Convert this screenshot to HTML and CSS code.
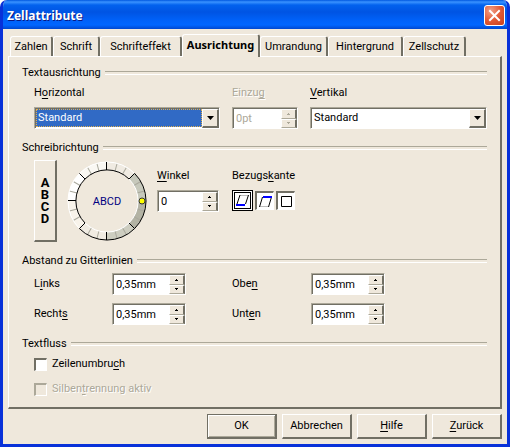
FILE: index.html
```html
<!DOCTYPE html>
<html lang="de">
<head>
<meta charset="utf-8">
<title>Zellattribute</title>
<link rel="stylesheet" href="styles.css">
</head>
<body>
<form class="dialog">
  <header class="titlebar">
    <h1>Zellattribute</h1>
    <button type="button" class="close" aria-label="Schließen">
      <svg width="21" height="21" viewBox="0 0 21 21" aria-hidden="true"><path d="M6 6L15 15M15 6L6 15"/></svg>
    </button>
  </header>

  <nav class="tabs" role="tablist">
    <button type="button" role="tab" class="tab">Zahlen</button>
    <button type="button" role="tab" class="tab">Schrift</button>
    <button type="button" role="tab" class="tab">Schrifteffekt</button>
    <button type="button" role="tab" class="tab active" aria-selected="true">Ausrichtung</button>
    <button type="button" role="tab" class="tab">Umrandung</button>
    <button type="button" role="tab" class="tab">Hintergrund</button>
    <button type="button" role="tab" class="tab">Zellschutz</button>
  </nav>

  <main class="panel">
    <section class="group">
      <h2>Textausrichtung</h2>
      <div class="group-body alignment">
        <div class="field">
          <label for="horizontal">H<u>o</u>rizontal</label>
          <div class="combo focused">
            <select id="horizontal"><option>Standard</option></select>
            <span class="drop"><svg width="7" height="4" viewBox="0 0 7 4" aria-hidden="true"><path d="M0 0H7L3.5 4Z"/></svg></span>
          </div>
        </div>
        <div class="field">
          <label for="indent" class="disabled">Einzu<u>g</u></label>
          <div class="spin disabled">
            <input id="indent" type="text" value="0pt" disabled>
            <div class="arrows">
              <button type="button" aria-label="Mehr" disabled><svg width="3" height="2" viewBox="0 0 3 2"><path d="M1 0h1v1h1v1H0V1h1Z"/></svg></button>
              <button type="button" aria-label="Weniger" disabled><svg width="3" height="2" viewBox="0 0 3 2"><path d="M0 0h3v1H2v1H1V1H0Z"/></svg></button>
            </div>
          </div>
        </div>
        <div class="field">
          <label for="vertical"><u>V</u>ertikal</label>
          <div class="combo">
            <select id="vertical"><option>Standard</option></select>
            <span class="drop"><svg width="7" height="4" viewBox="0 0 7 4" aria-hidden="true"><path d="M0 0H7L3.5 4Z"/></svg></span>
          </div>
        </div>
      </div>
    </section>

    <section class="group">
      <h2>Schreibrichtung</h2>
      <div class="group-body direction">
        <button type="button" class="stacked"><span>A</span><span>B</span><span>C</span><span>D</span></button>
        <svg class="dial" width="80" height="82" viewBox="-40 -41 80 82" role="img" aria-label="Winkel">
          <g class="shade">
            <circle r="35" pathLength="24" stroke="#fff"/>
            <circle r="35" pathLength="24" stroke="#b3b3a4" stroke-dasharray="3 21"/>
            <circle r="35" pathLength="24" stroke="#cdcdc0" stroke-dasharray="3 21" stroke-dashoffset="-3"/>
            <circle r="35" pathLength="24" stroke="#f0ebe2" stroke-dasharray="3 21" stroke-dashoffset="-6"/>
            <circle r="35" pathLength="24" stroke="#f8f3ea" stroke-dasharray="3 21" stroke-dashoffset="-9"/>
            <circle r="35" pathLength="24" stroke="#faf8f3" stroke-dasharray="3 21" stroke-dashoffset="-15"/>
            <circle r="35" pathLength="24" stroke="#f0ebe2" stroke-dasharray="3 21" stroke-dashoffset="-18"/>
            <circle r="35" pathLength="24" stroke="#c6c8bb" stroke-dasharray="3 21" stroke-dashoffset="-21"/>
          </g>
          <g class="minor">
            <g id="pair"><path d="M31 0H39" transform="rotate(15)"/><path d="M31 0H39" transform="rotate(30)"/></g>
            <use href="#pair" transform="rotate(45)"/><use href="#pair" transform="rotate(90)"/>
            <use href="#pair" transform="rotate(135)"/><use href="#pair" transform="rotate(180)"/>
            <use href="#pair" transform="rotate(225)"/><use href="#pair" transform="rotate(270)"/>
            <use href="#pair" transform="rotate(315)"/>
          </g>
          <g class="rim">
            <path class="light" d="M-27.6 27.6A39 39 0 0 1 27.6 -27.6"/>
            <path class="dark" d="M27.6 -27.6A39 39 0 0 1 -27.6 27.6"/>
            <path class="dark" d="M-22 22A31 31 0 0 1 22 -22"/>
            <path class="light" d="M22 -22A31 31 0 0 1 -22 22"/>
          </g>
          <g class="major">
            <path d="M-.5 -39V-31M-.5 31V39M-39 -.5H-31M-27.6 -27.6L-22 -22M27.6 -27.6L22 -22M-27.6 27.6L-22 22M27.6 27.6L22 22"/>
          </g>
          <circle class="knob" cx="35" cy="0" r="3"/>
          <text x="0" y="4">ABCD</text>
        </svg>
        <div class="field angle">
          <label for="angle"><u>W</u>inkel</label>
          <div class="spin">
            <input id="angle" type="text" value="0">
            <div class="arrows">
              <button type="button" aria-label="Mehr"><svg width="3" height="2" viewBox="0 0 3 2"><path d="M1 0h1v1h1v1H0V1h1Z"/></svg></button>
              <button type="button" aria-label="Weniger"><svg width="3" height="2" viewBox="0 0 3 2"><path d="M0 0h3v1H2v1H1V1H0Z"/></svg></button>
            </div>
          </div>
        </div>
        <div class="field angle" role="radiogroup" aria-labelledby="edge-label">
          <span id="edge-label">Bezugs<u>k</u>ante</span>
          <div class="edges">
            <label class="edge">
              <input type="radio" name="edge" aria-label="Untere Zellkante" checked>
              <svg width="13" height="13" viewBox="0 0 13 13"><path class="faint" d="M4 1.5H12"/><path class="ink" d="M4 1L1 10M12.5 1L9.5 10"/><path class="blue" d="M0 11H9"/></svg>
            </label>
            <label class="edge">
              <input type="radio" name="edge" aria-label="Obere Zellkante">
              <svg width="13" height="13" viewBox="0 0 13 13"><path class="faint" d="M1 11.5H9"/><path class="ink" d="M3.5 2L.5 12M12.5 2L9.5 12"/><path class="blue" d="M4 2H13"/></svg>
            </label>
            <label class="edge">
              <input type="radio" name="edge" aria-label="Innerhalb der Zelle">
              <svg width="13" height="13" viewBox="0 0 13 13"><path class="ink" d="M1.5 1.5H11.5V11.5H1.5Z"/></svg>
            </label>
          </div>
        </div>
      </div>
    </section>

    <section class="group">
      <h2>Abstand zu Gitterlinien</h2>
      <div class="group-body spacing">
        <label for="left">L<u>i</u>nks</label>
        <div class="spin">
          <input id="left" type="text" value="0,35mm">
          <div class="arrows">
            <button type="button" aria-label="Mehr"><svg width="3" height="2" viewBox="0 0 3 2"><path d="M1 0h1v1h1v1H0V1h1Z"/></svg></button>
            <button type="button" aria-label="Weniger"><svg width="3" height="2" viewBox="0 0 3 2"><path d="M0 0h3v1H2v1H1V1H0Z"/></svg></button>
          </div>
        </div>
        <label for="top">Obe<u>n</u></label>
        <div class="spin">
          <input id="top" type="text" value="0,35mm">
          <div class="arrows">
            <button type="button" aria-label="Mehr"><svg width="3" height="2" viewBox="0 0 3 2"><path d="M1 0h1v1h1v1H0V1h1Z"/></svg></button>
            <button type="button" aria-label="Weniger"><svg width="3" height="2" viewBox="0 0 3 2"><path d="M0 0h3v1H2v1H1V1H0Z"/></svg></button>
          </div>
        </div>
        <label for="right">Recht<u>s</u></label>
        <div class="spin">
          <input id="right" type="text" value="0,35mm">
          <div class="arrows">
            <button type="button" aria-label="Mehr"><svg width="3" height="2" viewBox="0 0 3 2"><path d="M1 0h1v1h1v1H0V1h1Z"/></svg></button>
            <button type="button" aria-label="Weniger"><svg width="3" height="2" viewBox="0 0 3 2"><path d="M0 0h3v1H2v1H1V1H0Z"/></svg></button>
          </div>
        </div>
        <label for="bottom">Unt<u>e</u>n</label>
        <div class="spin">
          <input id="bottom" type="text" value="0,35mm">
          <div class="arrows">
            <button type="button" aria-label="Mehr"><svg width="3" height="2" viewBox="0 0 3 2"><path d="M1 0h1v1h1v1H0V1h1Z"/></svg></button>
            <button type="button" aria-label="Weniger"><svg width="3" height="2" viewBox="0 0 3 2"><path d="M0 0h3v1H2v1H1V1H0Z"/></svg></button>
          </div>
        </div>
      </div>
    </section>

    <section class="group">
      <h2>Textfluss</h2>
      <div class="group-body checks">
        <label class="check"><input type="checkbox"><span>Zeilenumbru<u>c</u>h</span></label>
        <label class="check disabled"><input type="checkbox" disabled><span>Silben<u>t</u>rennung aktiv</span></label>
      </div>
    </section>
  </main>

  <footer class="actions">
    <button type="button" class="push default">OK</button>
    <button type="button" class="push">Abbrechen</button>
    <button type="button" class="push"><u>H</u>ilfe</button>
    <button type="button" class="push"><u>Z</u>urück</button>
  </footer>
</form>
</body>
</html>
```
FILE: styles.css
```css
:root {
  --face: #efe8dc;
  --light: #fff;
  --mid: #aca899;
  --dark: #716f64;
  --sunken: #aca899 #fff #fff #aca899;
}

* { box-sizing: border-box; }

body {
  margin: 0;
  background: #fff;
  color: #000;
  font: 11px/16px Roboto, "Noto Sans", sans-serif;
}

button, input, select {
  margin: 0;
  padding: 0;
  border: 0;
  color: inherit;
  font: inherit;
  border-radius: 0;
  appearance: none;
}

svg { display: block; }
u { text-underline-offset: 2px; text-decoration-skip-ink: none; }

.dialog {
  display: flex;
  flex-direction: column;
  min-height: 100vh;
  border: solid #0831d9;
  border-width: 0 3px 3px;
  border-radius: 7px 7px 0 0;
  background: var(--face);
  overflow: hidden;
}

/* Title bar */
.titlebar {
  display: flex;
  align-items: center;
  justify-content: space-between;
  height: 29px;
  margin: 0 -3px;
  padding: 2px 5px 0 7px;
  background: linear-gradient(#0058e0 0, #3a93ff 2px, #0262ee 5px, #0054e3 12px, #0061f8 20px, #0066ff 25px, #0047cf 29px);
}

.titlebar h1 {
  margin: 0;
  color: #fff;
  font: bold 12px/16px "Noto Sans", sans-serif;
  text-shadow: 1px 1px #0a1883;
}

.close {
  width: 21px;
  height: 21px;
  border: 1px solid #fff;
  border-radius: 3px;
  background: radial-gradient(circle at 30% 25%, #f0a088, #e25a36 50%, #c8401c);
}

.close svg { margin: -1px; stroke: #fff; stroke-width: 2; stroke-linecap: square; }

/* Tabs */
.tabs {
  display: grid;
  grid-template-columns: 43px 47px 82px 78px 68px 75px 63px;
  align-items: end;
  padding: 5px 7px 0;
}

.tab {
  height: 20px;
  border: solid;
  border-width: 1px 2px 0 1px;
  border-color: var(--light) var(--dark) transparent var(--light);
  border-radius: 3px 3px 0 0;
  background: var(--face);
  white-space: nowrap;
}

.tab.active {
  position: relative;
  height: 23px;
  margin-bottom: -1px;
  padding-bottom: 2px;
  font-family: "Noto Sans", sans-serif;
  font-weight: bold;
}

/* Panel */
.panel {
  display: flex;
  flex: 1;
  flex-direction: column;
  gap: 11px;
  margin: 0 5px;
  padding: 8px 13px 10px;
  border: solid;
  border-width: 1px 2px 2px 1px;
  border-color: var(--light) var(--dark) var(--dark) var(--light);
}

.group h2 {
  display: flex;
  align-items: center;
  gap: 4px;
  margin: 0;
  font: inherit;
}

.group h2::after {
  content: "";
  flex: 1;
  height: 2px;
  border-top: 1px solid var(--mid);
  border-bottom: 1px solid var(--light);
}

.group-body { padding: 4px 0 0 12px; }

.field { display: flex; flex-direction: column; gap: 6px; }

.alignment {
  display: grid;
  grid-template-columns: 186fr 66px 177fr;
  gap: 12px;
}

.disabled { color: var(--mid); }
label.disabled { text-shadow: 1px 1px #fff; }

/* Combo boxes */
.combo {
  position: relative;
  height: 22px;
  padding: 1px;
  border: 1px solid;
  border-color: var(--sunken);
  background: #fff;
  box-shadow: inset 1px 1px var(--dark);
}

.combo select {
  width: 100%;
  height: 100%;
  padding: 0 18px 0 2px;
  background: transparent;
  outline: none;
}

.combo.focused select {
  width: calc(100% - 16px);
  padding: 0 0 0 1px;
  border: 1px dotted #e0b050;
  background: #316ac5;
  color: #fff;
}

.drop {
  position: absolute;
  top: 1px;
  right: 0;
  bottom: 0;
  display: grid;
  place-items: center;
  width: 17px;
  border: solid;
  border-width: 1px 2px 2px 1px;
  border-color: var(--light) var(--dark) var(--dark) var(--light);
  background: var(--face);
  pointer-events: none;
}

/* Spin fields */
.spin {
  display: flex;
  height: 22px;
  padding: 1px 0 0 1px;
  border: 1px solid;
  border-color: var(--sunken);
  background: #fff;
  box-shadow: inset 1px 1px var(--dark);
}

.spin input {
  flex: 1;
  width: 0;
  min-width: 0;
  padding-left: 2px;
  background: transparent;
}

.spin input:disabled { color: var(--mid); }

.arrows { display: flex; flex-direction: column; width: 16px; }

.arrows button {
  display: grid;
  flex: 1;
  place-items: center;
  border: solid;
  border-width: 1px 2px 1px 1px;
  border-color: var(--light) var(--dark) var(--mid) var(--light);
  background: var(--face);
}

.spin.disabled svg { fill: var(--mid); }

/* Writing direction */
.direction {
  display: grid;
  grid-template-columns: 23px 80px 62px 1fr;
  column-gap: 10px;
}

.direction .field:last-child { padding-left: 3px; }
.angle { padding-top: 8px; }

.stacked {
  display: flex;
  flex-direction: column;
  align-items: center;
  justify-content: center;
  border: solid;
  border-width: 1px 2px 2px 1px;
  border-color: var(--light) var(--dark) var(--dark) var(--light);
  background: var(--face);
  font-size: 13px;
  font-weight: bold;
  line-height: 12px;
}

.dial { fill: none; }
.shade { stroke-width: 8; }
.minor { stroke: #aaa99d; }
.light { stroke: #fff; }
.dark, .major { stroke: #000; }
.knob { fill: #ff0; stroke: #333; }
.dial text { fill: #000080; font-size: 11px; text-anchor: middle; }

.edges { display: flex; align-items: center; gap: 2px; }

.edge {
  display: grid;
  place-items: center;
  width: 19px;
  height: 19px;
  border: solid;
  border-width: 2px 1px 1px 2px;
  border-color: var(--dark) #fff #fff var(--dark);
  background: #fff;
}

.edge:has(:checked) {
  width: 21px;
  height: 21px;
  border: 3px double #000;
}

.edge input, .edge svg { grid-area: 1 / 1; }
.edge input { width: 13px; height: 13px; }
.edge svg { fill: none; }
.ink { stroke: #000; }
.faint { stroke: #bbb; }
.blue { stroke: #00f; stroke-width: 2; }

/* Grid line spacing */
.spacing {
  display: grid;
  grid-template-columns: 78px 120px 79px 1fr;
  row-gap: 8px;
  align-items: center;
}

.spacing .spin { width: 74px; }

/* Check boxes */
.checks { display: flex; flex-direction: column; align-items: flex-start; gap: 9px; }
.check { display: flex; align-items: center; gap: 5px; }

.check input {
  width: 13px;
  height: 13px;
  border: solid;
  border-width: 2px 1px 1px 2px;
  border-color: var(--dark) #fff #fff var(--dark);
  background: #fff;
}

.check input:disabled { background: var(--face); border-color: var(--mid) #fff #fff var(--mid); }

/* Dialog buttons */
.actions {
  display: flex;
  justify-content: flex-end;
  gap: 5px;
  padding: 5px;
}

.push {
  width: 70px;
  height: 25px;
  border: solid;
  border-width: 1px 2px 2px 1px;
  border-color: var(--light) var(--dark) var(--dark) var(--light);
  background: var(--face);
}

.push.default {
  border-color: var(--dark);
  box-shadow: inset 1px 1px #fff, inset -1px -1px var(--mid);
}
```
